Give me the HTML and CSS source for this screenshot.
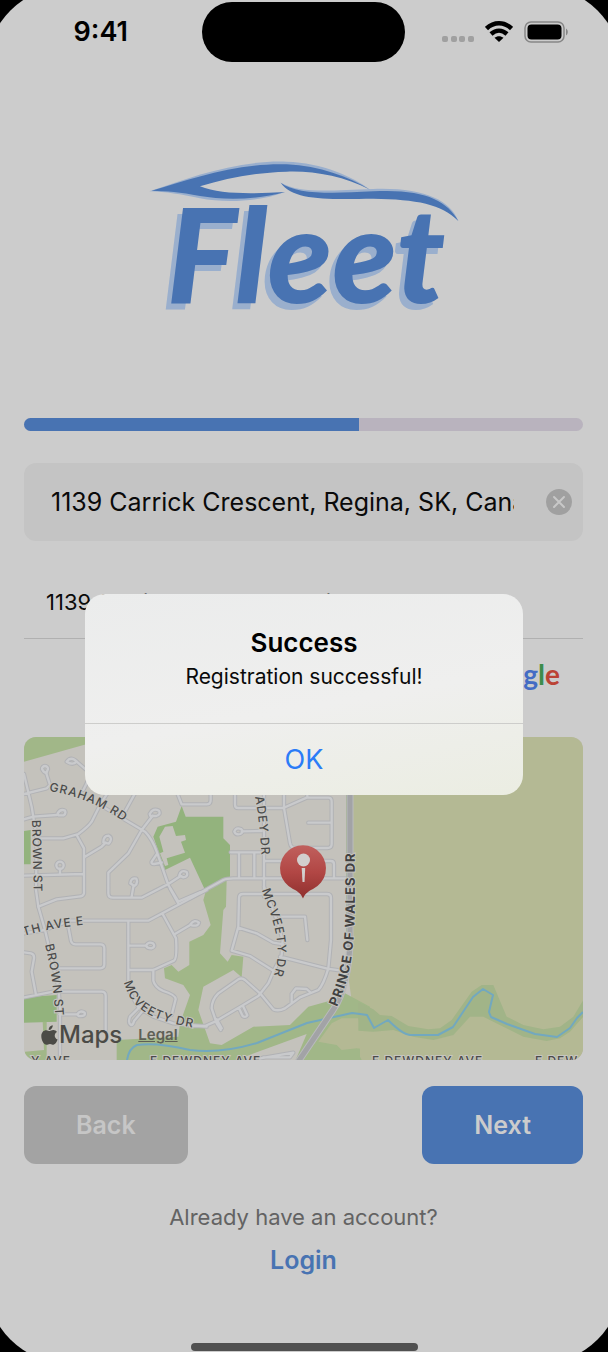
FILE: index.html
```html
<!DOCTYPE html>
<html lang="en">
<head>
<meta charset="utf-8">
<meta name="viewport" content="width=device-width, initial-scale=1">
<title>Fleet – Register</title>
<link rel="stylesheet" href="styles.css">
</head>
<body>
<div class="screen">
  <header class="status">
    <time class="status-time">9:41</time>
    <div class="island"></div>
    <div class="status-icons">
      <svg width="32" height="22" viewBox="0 0 32 22" aria-hidden="true"><g fill="#a0a0a0"><rect x="0" y="15" width="6" height="6" rx="2"/><rect x="9" y="15" width="6" height="6" rx="2"/><rect x="17" y="15" width="6" height="6" rx="2"/><rect x="26" y="15" width="6" height="6" rx="2"/></g></svg>
      <svg width="28" height="22" viewBox="0 0 28 22" aria-hidden="true"><g fill="none" stroke="#000" stroke-width="4.500"><path d="M1.500 7.500C9 .5 19 .5 26.500 7.500"/><path d="M6 13C11 8.600 17 8.600 22 13"/></g><path d="M14 21l-4.500-4.200c2.500-2.200 6.500-2.200 9 0z"/></svg>
      <svg width="44" height="22" viewBox="0 0 44 22" aria-hidden="true"><rect x="1" y="1" width="39" height="20" rx="6" fill="none" stroke="#868686" stroke-width="1.500"/><rect x="3.500" y="3.500" width="34" height="15" rx="4"/><path d="M42 7.500c2.400 1.500 2.400 5.500 0 7z" fill="#868686"/></svg>
    </div>
  </header>

  <main class="content">
    <svg class="logo" viewBox="0 0 1005 510" role="img" aria-label="Fleet">
      <g fill="#9aafcd">
        <path d="M28 124C150 82 290 30 440 35C545 38 640 80 690 119C610 70 520 50 440 52C300 58 200 90 130 122C190 142 300 156 435 126C350 158 250 158 180 145C120 132 80 126 28 124z"/>
        <path d="M422 98C480 130 560 122 700 117C850 112 930 150 955 213C910 160 830 140 700 136C560 140 470 150 422 98z"/>
      </g>
      <g fill="#4873b2">
        <path d="M35 122C150 88 290 38 440 43C540 48 625 80 690 119C610 78 520 62 440 65C340 68 260 85 180 109C240 134 340 132 435 126C350 150 250 150 180 138C120 125 80 124 35 122z"/>
        <path d="M422 98C470 132 560 132 700 124C850 116 920 150 955 213C905 162 830 148 700 146C560 148 460 152 422 98z"/>
      </g>
      <text class="wordmark wordmark-shadow" x="64" y="476">Fleet</text>
      <text class="wordmark" x="80" y="460">Fleet</text>
    </svg>

    <div class="progress" role="progressbar" aria-valuenow="60" aria-valuemin="0" aria-valuemax="100" aria-label="Registration progress"><div class="progress-fill" style="width:60%"></div></div>

    <div class="field">
      <input class="field-input" type="text" aria-label="Address" value="1139 Carrick Crescent, Regina, SK, Canada">
      <button class="clear" type="button" aria-label="Clear address"><svg width="26" height="26" viewBox="0 0 26 26" aria-hidden="true"><circle cx="13" cy="13" r="13" fill="#a0a0a0"/><path d="M8 8l10 10M18 8L8 18" stroke="#c8c8c8" stroke-width="2" stroke-linecap="round"/></svg></button>
    </div>

    <div class="suggestion">1139 Carrick Crescent, Regina, SK, Canada</div>
    <div class="google" aria-label="Google"><span class="g-blue">G</span><span class="g-red">o</span><span class="g-yellow">o</span><span class="g-blue">g</span><span class="g-green">l</span><span class="g-red">e</span></div>

    <div class="map">
      <svg class="map-art" viewBox="24 737 559 323" preserveAspectRatio="xMidYMid slice" role="img" aria-label="Map of Carrick Crescent">
        <defs>
          <g id="roads" fill="none" stroke-linejoin="round" stroke-linecap="round">
            <g transform="translate(20 730) scale(.33333)">
              <path d="M12 132L35 230L50 325L48 480L55 530M12 192L80 175L90 165L78 127M12 268L40 260L110 255M50 325H130L175 312Q205 290 215 275L240 225L262 190M205 150L190 180M170 95L197 118M240 225L375 305C395 325 405 350 412 370L445 465L475 515M345 190L312 250M365 300L398 257M365 300L325 370L265 428V490Q265 503 278 503H365L445 462L482 438M170 315L192 355V490Q190 500 175 500L110 508L55 530M195 380L245 350L257 338M12 437L190 432M120 430V416M335 500L340 470M412 370L395 395Q393 402 402 402L425 398M472 190L485 223H560Q572 223 572 210V195M475 515L540 487"/>
              <path d="M66 117a9 9 0 1 1 18 0l-5 12q-7 0-13-12zM140 95q10-14 25-5l5 5q-12 12-30 0zM113 250q8-14 22-8q4 8-4 14h-16zM389 252q10-20 28-10q6 12-8 16h-18zM250 337q0-20 16-20q14 8 0 24zM109 406a11 11 0 1 1 22 0a11 11 0 1 1-22 0M331 460q2-18 18-14q6 14-6 22zM478 436q4-18 22-10q6 14-10 16z"/>
            </g>
            <g transform="translate(190 730) scale(.33333)">
              <path d="M135 195V224Q135 234 145 234H280L350 203H415Q425 203 425 215V342Q425 354 412 354H315Q303 354 300 340L282 234V190M352 190V203M355 278H425M155 304L215 303M222 180V500M122 367H222M147 367V440M193 367V440M0 505L100 450Q110 445 130 445H470M222 393H422Q432 393 432 403V445"/>
              <path d="M133 305q4-14 20-8q10 8-2 15q-14 4-18-7z"/>
            </g>
            <g transform="translate(20 890) scale(.33333)">
              <path d="M55 50L75 120L115 290L120 350V510M12 130L75 120L150 92H385L540 10L560 0M450-5L475 40M428 72L468 145Q472 205 462 212L400 240H325M325 92V300L355 352L400 380L460 400L560 410M465 132L512 104M325 167H378M143 100L153 153Q156 163 167 163H241Q253 163 253 175V223Q253 235 241 235H105M12 187L33 190Q43 192 42 205L35 245L48 315M12 322L100 305H245Q257 305 257 318V420M118 373H172M400 240V272Q405 292 430 303Q468 315 467 328L455 375M365 345L330 380Q323 400 333 405Q340 405 342 393L370 360"/>
              <path d="M512 102q12-15 25-4q-2 12-22 8zM378 167q6-14 22-6q8 10-6 14q-12 0-16-8zM172 373q8-14 22-5q4 12-18 10z"/>
            </g>
            <g transform="translate(190 890) scale(.33333)">
              <path d="M145 110L147 24Q147 12 159 12H411Q423 12 423 24V150L415 235Q400 285 385 300L330 322L285 355Q265 365 250 358L212 312L165 270Q155 262 145 268L85 310Q65 330 65 355L80 400L92 420M95 415L80 388M145 110L125 182L180 198L250 242M145 113L200 130L250 158L280 163M275 80H345L352 150M270 200L412 236L475 245M305 340V312L318 295L350 297L362 308M222-10L260 90L278 150L275 195L250 245L235 280L205 318L160 345L75 395L45 408H0M147 355L158 378Q166 384 172 376L160 350M210 505L310 488L300 502H220"/>
            </g>
          </g>
          <linearGradient id="pin" x1="0" y1="0" x2="0" y2="1"><stop offset="0" stop-color="#c0605d"/><stop offset=".5" stop-color="#b24745"/><stop offset="1" stop-color="#8f302e"/></linearGradient>
          <path id="graham" d="M49 791Q91 797 130 826"/>
          <path id="brown-a" d="M32 820L34 900"/>
          <path id="ave" d="M24 936Q52 927 94 924"/>
          <path id="brown-b" d="M45 945Q54 980 56 1028"/>
          <path id="mcv-a" d="M124 982C132 1014 158 1022 206 1030"/>
          <path id="adey" d="M255 797Q260 822 262 864"/>
          <path id="mcv-b" d="M262 890C268 912 290 946 268 990"/>
          <path id="prince" d="M337 1007C359 958 354 918 355 830"/>
        </defs>
        <rect x="24" y="737" width="559" height="323" fill="#c4c2bc"/>
        <path d="M353 737H583V1060H360L347 967L353 940z" fill="#b4b994"/>
        <g transform="translate(20 730) scale(.33333)">
          <path d="M12 95V20H220V37z" fill="#a1b788"/>
          <path d="M12 303L32 300V403H12z" fill="#93b37d"/>
          <path d="M485 228L497 260H610V325L630 345V440L555 480L510 383L435 420L400 320L413 290L468 275z" fill="#93b37d"/>
          <path d="M435 290L458 288L468 318L495 315L498 330L483 335L495 368L440 385L445 405L435 408L420 370L430 365L418 320z" fill="#c4c2bc"/>
        </g>
        <g transform="translate(20 890) scale(.33333)">
          <path d="M560-5L620-32L618 50L610 60L600 190L623 215L635 195L670 200L665 262L640 240L550 290L535 360L570 460L605 465L700 410L810 405L865 350L930 332L975 310L1050 350V515H290V450L475 440L480 400L510 315L490 285L435 265L432 235L455 225L475 245L508 225V155L550 135L572 105L550 30z" fill="#a1b788"/>
          <path d="M12 322L110 315V395L12 398z" fill="#93b37d"/>
          <path d="M68 395H80V510H15V485L72 480z" fill="#a1b788"/>
        </g>
        <g transform="translate(190 890) scale(.33333)">
          <path d="M165 500L350 432L315 515H165z" fill="#c4c2bc"/>
          <path d="M425 400L455 385H505L512 420L545 425V480L500 475L455 480L440 465L385 455z" fill="#b4b994"/>
        </g>
        <g transform="translate(360 900) scale(.33333)">
          <path d="M0 392L40 395L100 390L160 410L220 420L280 405L330 350H370L430 380L490 410L560 423L600 415L630 395L670 350V490H10L0 470z" fill="#b4b994"/>
          <path d="M-5 307L40 328L60 345L95 348L145 378L205 388L240 385L275 360L335 275L365 255H400L440 350L490 375L550 388L600 380L640 350L670 300V350L630 395L600 415L560 423L490 410L430 380L370 350H330L280 405L220 420L160 410L100 390L40 395L-5 392z" fill="#a1b488"/>
        </g>
        <path d="M127 1060Q129 1048 137 1045Q156 1042 190 1050Q220 1054 257 1043L307 1023L352 1013L360 1014L367 1015L374 1028L388 1020Q402 1034 410 1035H438L453 1027L463 1012L473 997L483 989L493 995L489 1012L491 1017L507 1024L535 1034L557 1037L570 1028L577 1018L583 1012" fill="none" stroke="#72a8bf" stroke-width="2" stroke-linejoin="round"/>
        <use href="#roads" stroke="#b1b2b5" stroke-width="13"/>
        <use href="#roads" stroke="#c9cacc" stroke-width="7"/>
        <g fill="none"><path d="M347 737V940" stroke="#9cb184" stroke-width="2"/><path d="M350 737V938C350 965 344 995 333 1010L298 1062" stroke="#b9babd" stroke-width="7"/><path d="M350 737V938C350 965 344 995 333 1010L298 1062" stroke="#a2a3a6" stroke-width="5"/></g>
        <g class="street">
          <text><textPath href="#graham">GRAHAM RD</textPath></text>
          <text><textPath href="#brown-a">BROWN ST</textPath></text>
          <text><textPath href="#ave">TH AVE E</textPath></text>
          <text><textPath href="#brown-b">BROWN ST</textPath></text>
          <text><textPath href="#mcv-a">MCVEETY DR</textPath></text>
          <text><textPath href="#adey">ADEY DR</textPath></text>
          <text><textPath href="#mcv-b">MCVEETY DR</textPath></text>
          <text class="street-major"><textPath href="#prince">PRINCE OF WALES DR</textPath></text>
          <text x="71" y="1065" text-anchor="end">Y AVE</text>
          <text x="150" y="1065">E DEWDNEY AVE</text>
          <text x="372" y="1065">E DEWDNEY AVE</text>
          <text x="535" y="1065">E DEW</text>
        </g>
        <path d="M303 898.500C301 894 299 892 293 889A23 23 0 1 1 313 889C307 892 305 894 303 898.500z" fill="url(#pin)"/>
        <circle cx="303.500" cy="860" r="6.500" fill="#d2cfce"/><path d="M301.700 868H305.200L304.500 882H302.500z" fill="#d2cfce"/>
      </svg>
      <div class="attribution">
        <svg width="17" height="21" viewBox="0 0 17 21" aria-hidden="true"><path fill="#4b4b47" d="M11.800.2c.1 2.700-1.700 4.700-4 4.800C7.500 2.600 9.400.5 11.800.2zM8.700 6c.8 0 2-1 3.700-.9 1.500.1 2.700.7 3.500 1.900-3.200 2-2.700 6.200.7 7.600-.8 2.300-2.300 5-4.100 5.100-1.300 0-1.800-.8-3.500-.8s-2.200.8-3.500.8C3 19.800.3 15.500.3 11.200c0-3.900 2.400-6 4.900-6 1.600 0 2.600.8 3.500.8z"/></svg>
        <span class="maps-name">Maps</span>
        <a class="legal" href="#legal">Legal</a>
      </div>
    </div>

    <div class="actions">
      <button class="btn btn-back" type="button">Back</button>
      <button class="btn btn-next" type="button">Next</button>
    </div>
    <p class="prompt">Already have an account?</p>
    <a class="login" href="#login">Login</a>
  </main>
  <div class="home"></div>

  <div class="overlay">
    <section class="alert" role="alertdialog" aria-labelledby="alert-title" aria-describedby="alert-text">
      <div class="alert-body">
        <h2 class="alert-title" id="alert-title">Success</h2>
        <p class="alert-text" id="alert-text">Registration successful!</p>
      </div>
      <button class="alert-ok" type="button">OK</button>
    </section>
  </div>
</div>
</body>
</html>
```
FILE: styles.css
```css
* { box-sizing: border-box; }

body {
  margin: 0;
  background: #ccc;
  color: #0a0a0a;
  font-family: Inter, "Liberation Sans", sans-serif;
}

button, input { font: inherit; color: inherit; border: 0; padding: 0; background: none; }
h2, p { margin: 0; }
a { color: inherit; text-decoration: none; }

.screen {
  position: relative;
  display: flex;
  flex-direction: column;
  min-height: 100vh;
  overflow: hidden;
}

/* Rounded display corners */
.screen::after {
  content: "";
  position: absolute;
  inset: -13px -13px -11px;
  border-radius: 80px;
  box-shadow: 0 0 0 60px #000;
  pointer-events: none;
}

.status {
  display: grid;
  grid-template-columns: 1fr 203px 1fr;
  padding: 2px 2px 0 0;
}
.status-time {
  justify-self: center;
  font-size: 27px;
  font-weight: 600;
  line-height: 60px;
  color: #000;
}
.island { height: 60px; border-radius: 30px; background: #000; }
.status-icons { display: flex; align-items: center; justify-content: center; gap: 11px; }

.content { display: flex; flex-direction: column; padding: 88px 25px 0 24px; }

.logo { align-self: center; width: 335px; height: 170px; margin-left: 8px; overflow: visible; }
.wordmark { font-family: Lato, "Open Sans", sans-serif; font-size: 396px; font-weight: 900; font-style: italic; fill: #4873b2; }
.wordmark-shadow { fill: #9aafcd; }

.progress { height: 13px; margin-top: 98px; border-radius: 7px; overflow: hidden; background: #b9b3be; }
.progress-fill { height: 100%; background: #4873b2; }

.field {
  display: flex;
  align-items: center;
  gap: 32px;
  height: 78px;
  margin-top: 32px;
  padding: 0 11px 0 27px;
  border-radius: 12px;
  background: #c4c4c4;
}
.field-input { flex: 1; min-width: 0; height: 40px; font-size: 25px; outline: 0; }
.clear { display: flex; }

.suggestion {
  height: 98px;
  padding: 46px 22px 0;
  border-bottom: 1px solid #b0b0b0;
  font-size: 22px;
  line-height: 30px;
  white-space: nowrap;
  overflow: hidden;
}

.google {
  height: 98px;
  padding: 18px 23px 0 0;
  text-align: right;
  font-family: Lato, sans-serif;
  font-size: 28px;
  font-weight: 700;
  line-height: 34px;
}
.g-blue { color: #446cc4; }
.g-red { color: #bb4335; }
.g-yellow { color: #c29a1c; }
.g-green { color: #3d8c4b; }

.map { position: relative; height: 323px; border-radius: 12px; overflow: hidden; background: #c4c2bc; }
.map-art { display: block; width: 100%; height: 100%; }
.street text {
  font-size: 12px;
  font-weight: 500;
  letter-spacing: 1px;
  fill: #4b4b4a;
  stroke: #c6c5c0;
  stroke-width: 2px;
  paint-order: stroke;
}
.street .street-major { font-size: 13px; font-weight: 700; fill: #414141; }
.attribution {
  position: absolute;
  left: 17px;
  bottom: 10px;
  display: flex;
  align-items: center;
  color: #4b4b47;
}
.maps-name { margin-left: 1px; font-size: 24px; font-weight: 500; line-height: 30px; }
.legal { margin-left: 16px; font-size: 15px; font-weight: 600; line-height: 18px; color: #5e6056; text-decoration: underline; }

.actions { display: flex; justify-content: space-between; margin-top: 26px; }
.btn { height: 78px; padding: 0 52px; border-radius: 12px; font-size: 25px; font-weight: 600; }
.btn-back { background: #a3a3a3; color: #c6c6c6; }
.btn-next { background: #4873b2; color: #ccc; }

.prompt { margin-top: 38px; text-align: center; font-size: 22px; line-height: 30px; color: #636363; }
.login { align-self: center; margin-top: 12px; font-size: 25px; font-weight: 600; line-height: 32px; color: #4873b2; }

.home { width: 227px; height: 8px; margin: auto auto 1px; border-radius: 4px; background: #505050; }

.overlay {
  position: absolute;
  inset: 0;
  display: grid;
  place-items: center;
  padding-top: 37px;
}
.alert {
  width: 72%;
  border-radius: 20px;
  overflow: hidden;
  background: linear-gradient(170deg, #ebecec, #efefee 55%, #ebede2);
  text-align: center;
}
.alert-body { padding: 32px 16px 31px; border-bottom: 1px solid #cdcdcb; }
.alert-title { font-size: 26px; font-weight: 600; line-height: 34px; color: #000; }
.alert-text { margin-top: 2px; font-size: 21px; line-height: 30px; }
.alert-ok { display: block; width: 100%; height: 71px; font-size: 27px; color: #2b7cf7; }
```
